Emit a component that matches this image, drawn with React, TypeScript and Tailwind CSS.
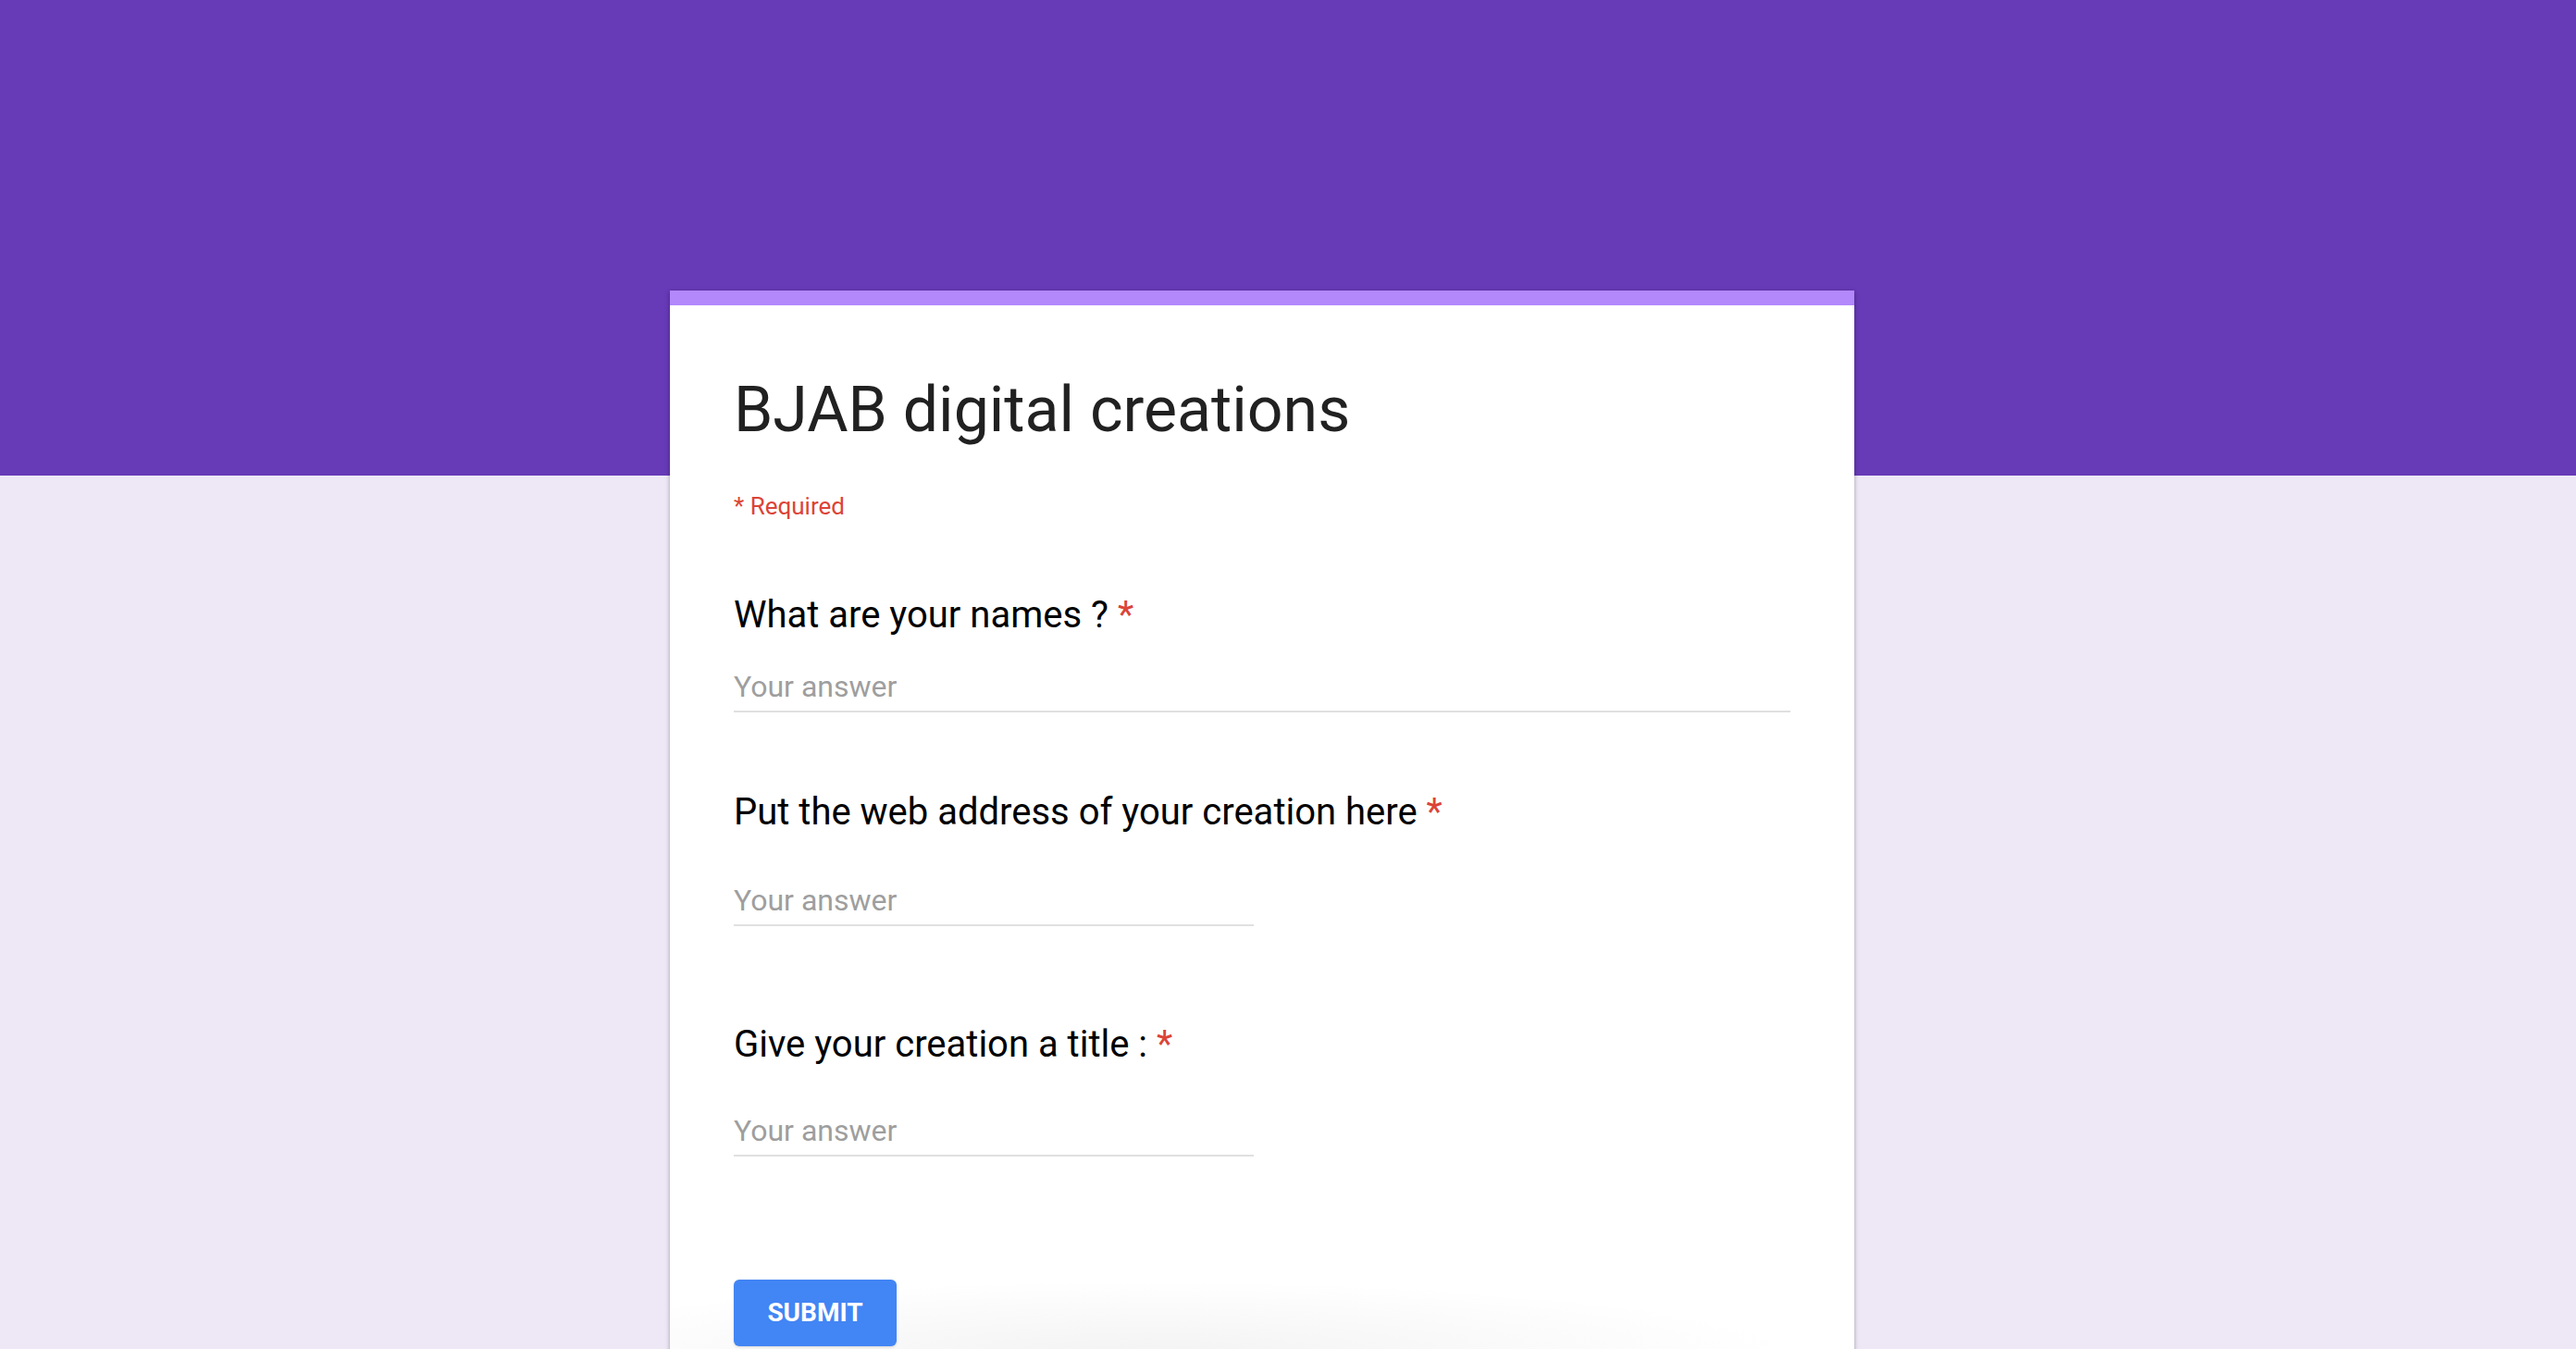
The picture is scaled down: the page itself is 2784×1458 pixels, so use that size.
import React from "react";

const font = { fontFamily: "Roboto, 'Liberation Sans', Arial, sans-serif" };

function Question({
  label,
  capGap,
  inputGap,
  full,
}: {
  label: string;
  capGap: string;
  inputGap: string;
  full?: boolean;
}) {
  return (
    <div className={capGap}>
      <div className="text-[40px] leading-none text-black">
        {label} <span className="text-[#db4437]">*</span>
      </div>
      <div
        className={`${inputGap} ${full ? "w-full" : "w-[562px]"} border-b-2 border-[#e0e0e0] pb-[10px] text-[32px] leading-none text-[#9e9e9e]`}
      >
        Your answer
      </div>
    </div>
  );
}

export default function App() {
  return (
    <div
      style={font}
      className="h-[1458px] w-full overflow-hidden bg-[linear-gradient(to_bottom,#673ab7_0px,#673ab7_514px,#ede7f6_514px)]"
    >
      <div className="relative ml-[724px] mt-[314px] h-[1200px] w-[1280px] bg-white shadow-[0_2px_4px_rgba(0,0,0,0.22),0_1px_6px_rgba(0,0,0,0.12)]">
        <div className="pointer-events-none absolute left-0 top-[1070px] h-[80px] w-full bg-[radial-gradient(ellipse_55%_100%_at_40%_100%,#f3f3f3,rgba(255,255,255,0))]" />
        <div className="relative h-[16px] w-full bg-[#b388fb]" />
        <div className="relative pl-[69px] pr-[69px] pt-[79px]">
          <h1 className="text-[68px] font-normal leading-none text-[#212121]">
            BJAB digital creations
          </h1>
          <div className="mt-[57px] text-[26px] leading-none text-[#db4437]">
            * Required
          </div>
          <Question label="What are your names ?" capGap="mt-[85px]" inputGap="mt-[41px]" full />
          <Question
            label="Put the web address of your creation here"
            capGap="mt-[88px]"
            inputGap="mt-[59px]"
          />
          <Question label="Give your creation a title :" capGap="mt-[108px]" inputGap="mt-[57px]" />
          <button className="mt-[133px] flex h-[72px] w-[176px] items-center justify-center rounded-[6px] bg-[#4285f4] text-[28px] font-bold leading-none text-white shadow-[0_1px_3px_rgba(0,0,0,0.15)]">
            SUBMIT
          </button>
        </div>
      </div>
    </div>
  );
}
